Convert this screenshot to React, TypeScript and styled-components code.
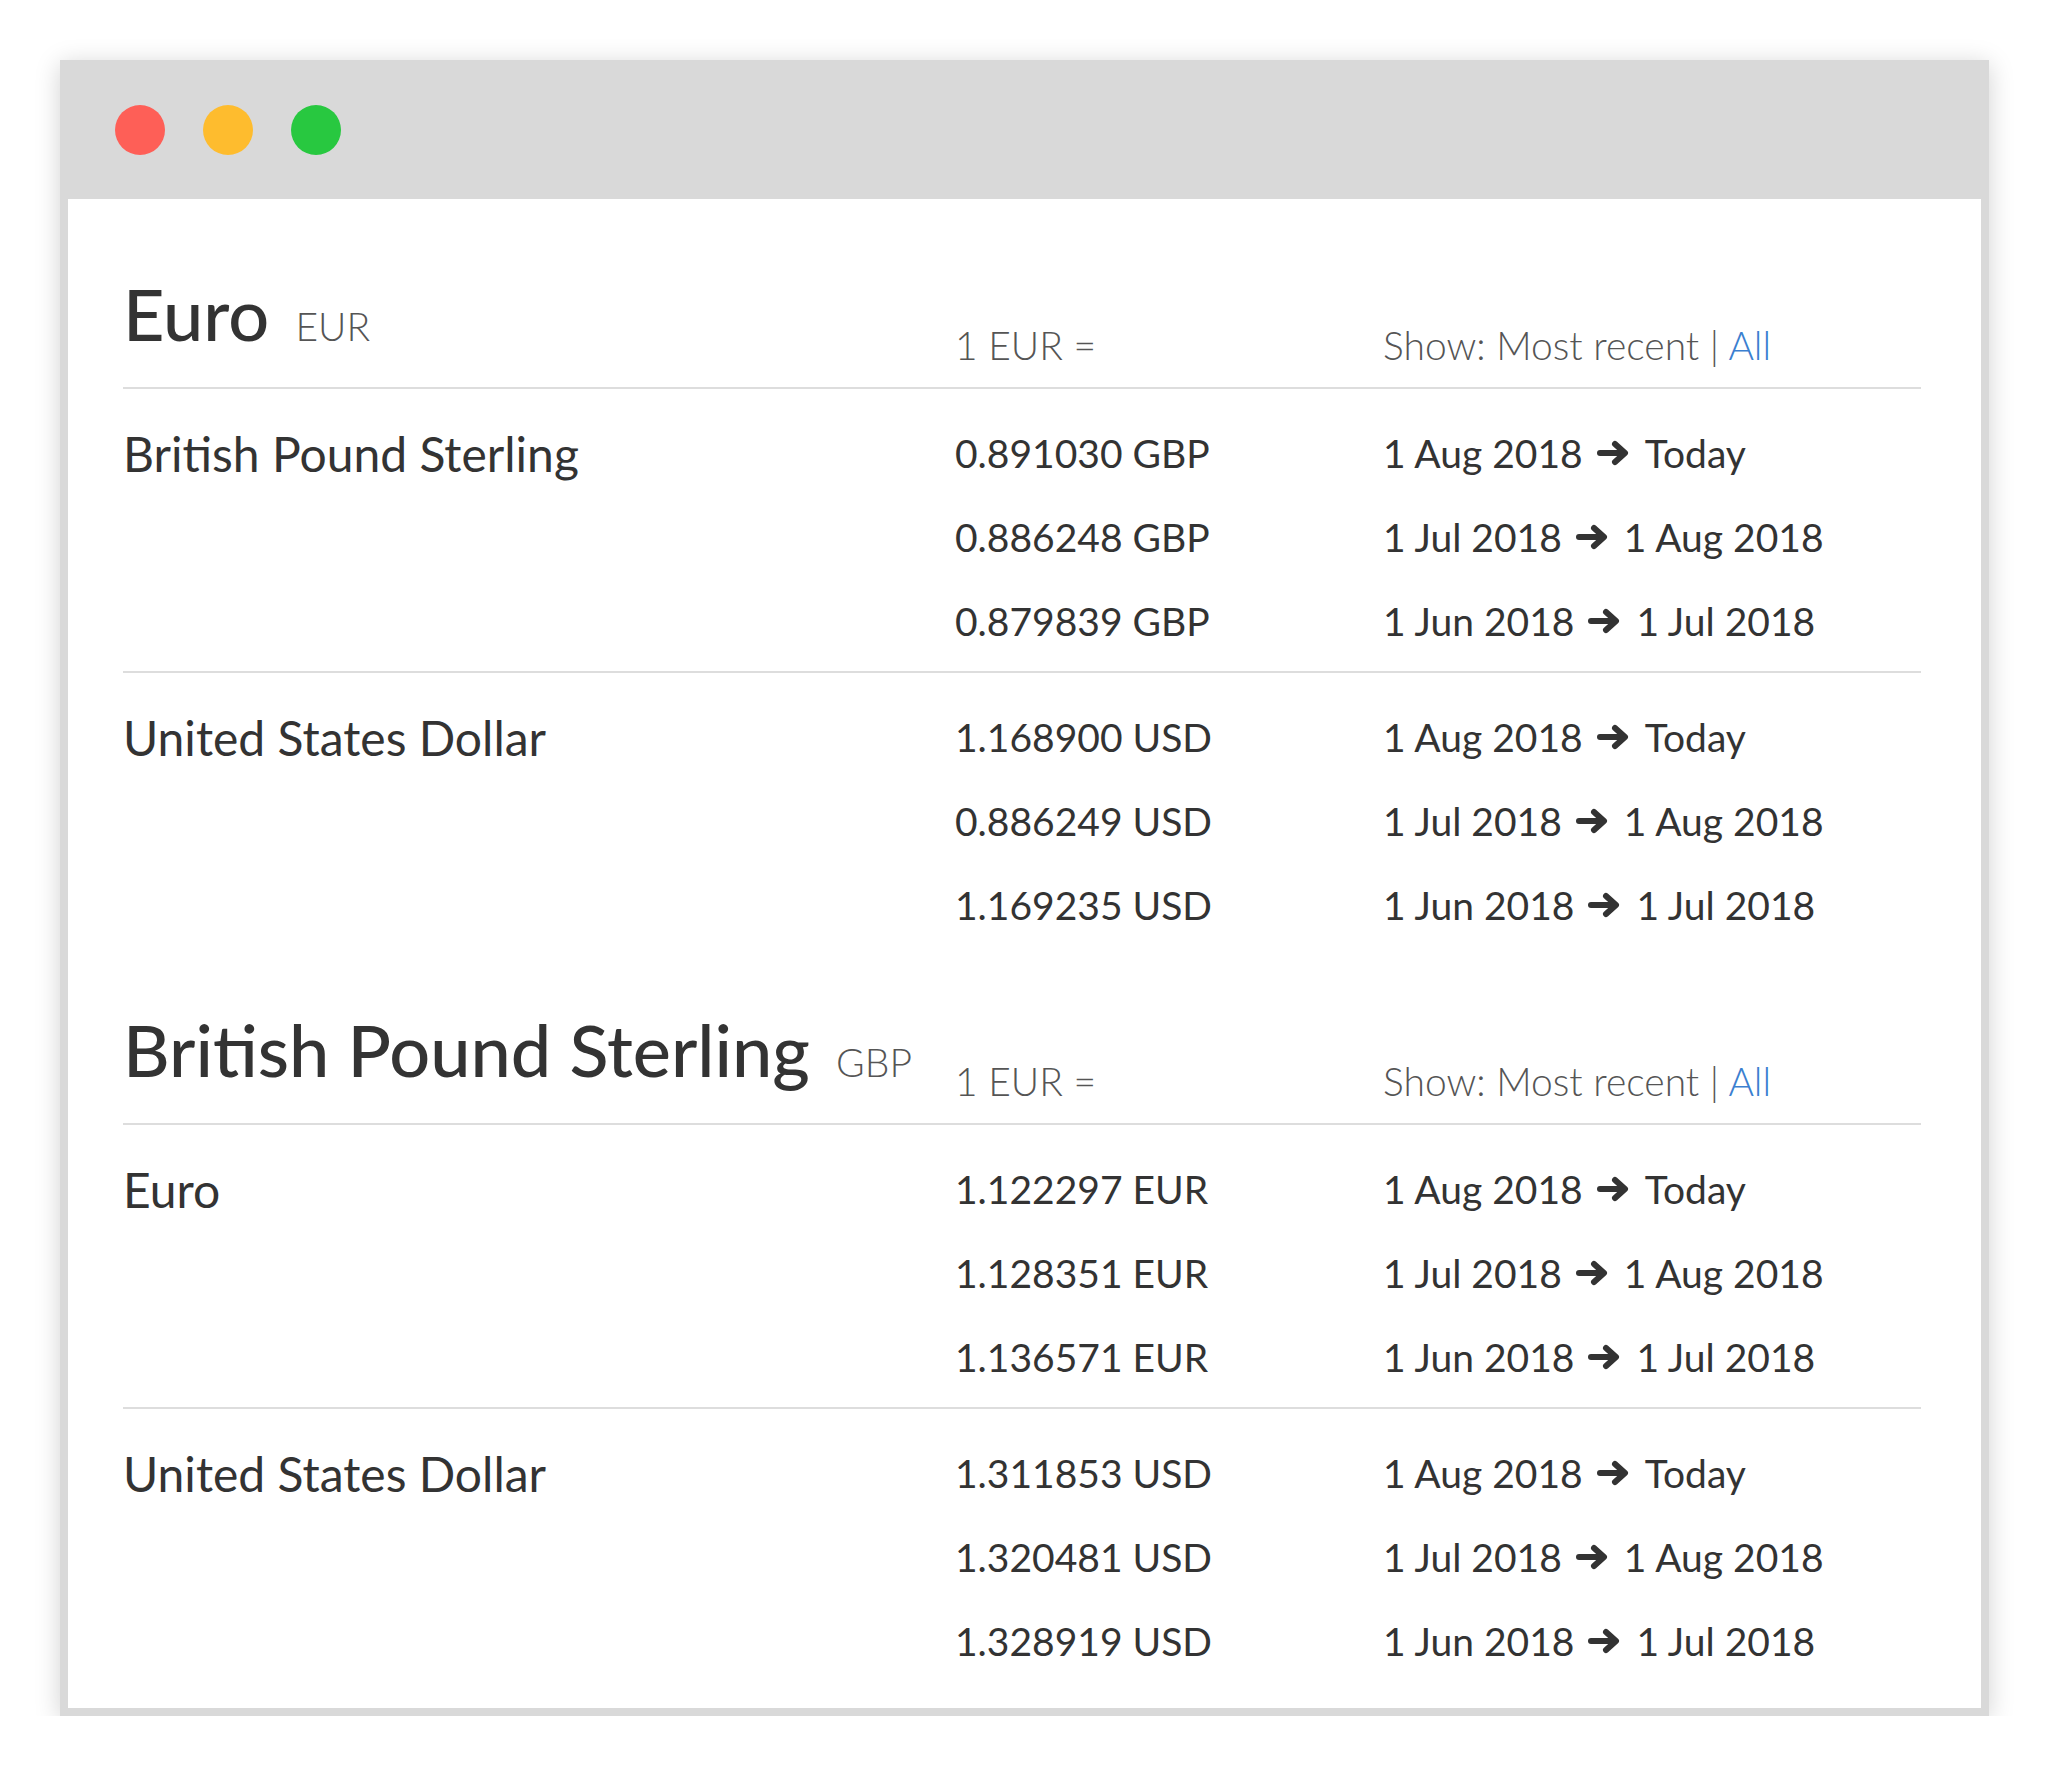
import styled, { createGlobalStyle } from "styled-components";

const GlobalStyle = createGlobalStyle`
  body {
    margin: 0;
    background: #fff;
    font-family: Lato, "Open Sans", sans-serif;
    color: #333;
  }
`;

interface Rate {
  value: string;
  from: string;
  to: string;
}

interface Target {
  name: string;
  rates: Rate[];
}

interface Section {
  name: string;
  code: string;
  targets: Target[];
}

const periods = [
  ["1 Aug 2018", "Today"],
  ["1 Jul 2018", "1 Aug 2018"],
  ["1 Jun 2018", "1 Jul 2018"],
];

const mk = (name: string, values: string[]): Target => ({
  name,
  rates: values.map((v, i) => ({ value: v, from: periods[i][0], to: periods[i][1] })),
});

const sections: Section[] = [
  {
    name: "Euro",
    code: "EUR",
    targets: [
      mk("British Pound Sterling", ["0.891030 GBP", "0.886248 GBP", "0.879839 GBP"]),
      mk("United States Dollar", ["1.168900 USD", "0.886249 USD", "1.169235 USD"]),
    ],
  },
  {
    name: "British Pound Sterling",
    code: "GBP",
    targets: [
      mk("Euro", ["1.122297 EUR", "1.128351 EUR", "1.136571 EUR"]),
      mk("United States Dollar", ["1.311853 USD", "1.320481 USD", "1.328919 USD"]),
    ],
  },
];

const Arrow = () => (
  <ArrowSvg viewBox="0 0 34 28" width="34" height="28">
    <path d="M3 14 H25" stroke="#333" strokeWidth="6" strokeLinecap="round" />
    <path d="M18 5 L28 14 L18 23" fill="none" stroke="#333" strokeWidth="6" strokeLinecap="round" strokeLinejoin="round" />
  </ArrowSvg>
);

export default function App() {
  return (
    <>
      <GlobalStyle />
      <Window>
        <TitleBar>
          <Dot color="#fe5f57" />
          <Dot color="#febc2e" />
          <Dot color="#28c840" />
        </TitleBar>
        <Content>
          {sections.map((s, si) => (
            <SectionBlock key={s.code} first={si === 0}>
              <HeaderRow>
                <Title>
                  {s.name} <Code>{s.code}</Code>
                </Title>
                <HeaderCell>1 EUR =</HeaderCell>
                <HeaderCell>
                  Show: Most recent | <Link>All</Link>
                </HeaderCell>
              </HeaderRow>
              {s.targets.map((t, ti) => (
                <Group key={t.name} last={ti === s.targets.length - 1}>
                  {t.rates.map((r, ri) => (
                    <Row key={ri}>
                      <Name>{ri === 0 ? t.name : ""}</Name>
                      <Cell>{r.value}</Cell>
                      <Cell>
                        {r.from} <Arrow /> {r.to}
                      </Cell>
                    </Row>
                  ))}
                </Group>
              ))}
            </SectionBlock>
          ))}
        </Content>
      </Window>
    </>
  );
}

const Window = styled.div`
  margin: 60px 0 0 60px;
  width: 1929px;
  height: 1656px;
  box-sizing: border-box;
  border: 8px solid #d9d9d9;
  border-top: none;
  background: #fff;
  box-shadow: 0 4px 24px rgba(0, 0, 0, 0.18);
  display: flex;
  flex-direction: column;
`;

const TitleBar = styled.div`
  height: 139px;
  flex-shrink: 0;
  background: #d9d9d9;
  margin: 0 -8px;
  display: flex;
  align-items: center;
  gap: 38px;
  padding-left: 55px;
`;

const Dot = styled.span<{ color: string }>`
  width: 50px;
  height: 50px;
  border-radius: 50%;
  background: ${(p) => p.color};
`;

const Content = styled.div`
  padding: 0 60px 22px 55px;
`;

const SectionBlock = styled.div<{ first: boolean }>`
  padding-top: ${(p) => (p.first ? 78 : 58)}px;
`;

const Grid = styled.div`
  display: grid;
  grid-template-columns: 832px 428px 1fr;
`;

const HeaderRow = styled(Grid)`
  align-items: end;
  padding-bottom: 22px;
  border-bottom: 2px solid #dddddd;
`;

const Title = styled.div`
  font-size: 72px;
  line-height: 1;
  font-weight: 500;
  color: #333;
  margin-bottom: 16px;
  white-space: nowrap;
`;

const Code = styled.span`
  font-size: 39px;
  font-weight: 300;
  color: #555;
  margin-left: 8px;
`;

const HeaderCell = styled.div`
  font-size: 39px;
  line-height: 1;
  font-weight: 300;
  color: #555;
`;

const Link = styled.span`
  color: #3b7fd0;
`;

const Group = styled.div<{ last: boolean }>`
  padding: 22px 0 8px;
  border-bottom: ${(p) => (p.last ? "none" : "2px solid #dddddd")};
`;

const Row = styled(Grid)`
  height: 84px;
  align-items: center;
`;

const Cell = styled.div`
  font-size: 39px;
  color: #333;
  white-space: nowrap;
  display: flex;
  align-items: center;
  gap: 14px;
`;

const Name = styled(Cell)`
  font-size: 48px;
`;

const ArrowSvg = styled.svg`
  display: block;
`;
